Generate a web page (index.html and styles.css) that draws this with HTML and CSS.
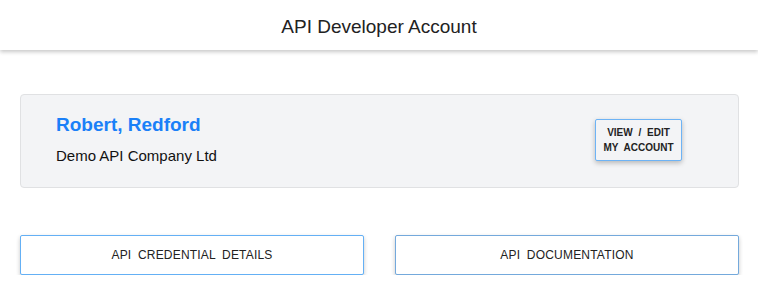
FILE: index.html
```html
<!DOCTYPE html>
<html>
<head>
<meta charset="utf-8">
<link rel="stylesheet" href="styles.css">
</head>
<body>
<header class="topbar">API Developer Account</header>
<main class="content">
  <section class="account-card">
    <div class="account-info">
      <div class="account-name">Robert, Redford</div>
      <div class="account-company">Demo API Company Ltd</div>
    </div>
    <button class="edit-btn">VIEW / EDIT<br>MY ACCOUNT</button>
  </section>
  <nav class="actions">
    <button class="action-btn action-primary">API CREDENTIAL DETAILS</button>
    <button class="action-btn action-secondary">API DOCUMENTATION</button>
  </nav>
</main>
</body>
</html>
```
FILE: styles.css
```css
html, body {
  margin: 0;
  padding: 0;
  background: #ffffff;
  font-family: "Liberation Sans", Arial, sans-serif;
  color: #111;
}
.topbar {
  height: 50px;
  line-height: 54px;
  text-align: center;
  font-size: 19px;
  color: #222;
  background: #fff;
  box-shadow: 0 2px 4px rgba(0, 0, 0, 0.22);
  position: relative;
}
.content {
  padding: 44px 19px 0 20px;
}
.account-card {
  display: flex;
  align-items: center;
  justify-content: space-between;
  background: #f3f4f6;
  border: 1px solid #e0e1e3;
  border-radius: 4px;
  padding: 19px 56px 21px 35px;
}
.account-name {
  font-size: 19px;
  font-weight: bold;
  color: #1a80f8;
  line-height: 22px;
}
.account-company {
  font-size: 15px;
  line-height: 20px;
  margin-top: 10px;
  color: #111;
}
.edit-btn {
  width: 87px;
  height: 42px;
  padding: 0;
  background: #f3f4f6;
  border: 1px solid #6db3f5;
  border-radius: 2px;
  box-shadow: 0 2px 5px rgba(0, 0, 0, 0.25);
  font-family: "Liberation Sans", Arial, sans-serif;
  font-size: 10px;
  font-weight: bold;
  line-height: 15px;
  word-spacing: 3px;
  color: #222;
  text-align: center;
}
.actions {
  display: grid;
  grid-template-columns: 1fr 1fr;
  column-gap: 31px;
  margin-top: 47px;
}
.action-btn {
  height: 40px;
  background: #fff;
  border-radius: 2px;
  box-shadow: 0 2px 4px rgba(0, 0, 0, 0.22);
  font-family: "Liberation Sans", Arial, sans-serif;
  font-size: 12px;
  word-spacing: 3px;
  letter-spacing: 0.2px;
  color: #222;
}
.action-primary {
  border: 1px solid #64b0f5;
}
.action-secondary {
  border: 1px solid #74a9dc;
}
```
